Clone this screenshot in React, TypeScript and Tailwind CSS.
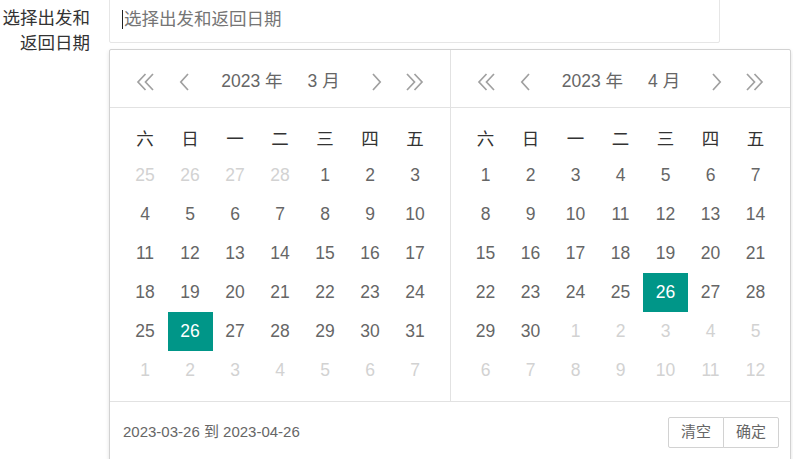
import React from "react";

type Day = { n: number; muted?: boolean; selected?: boolean };

const FONT = { fontFamily: '"Liberation Sans", "Noto Sans CJK SC", sans-serif' };

const WEEK = ["六", "日", "一", "二", "三", "四", "五"];

function range(a: number, b: number, muted = false): Day[] {
  const out: Day[] = [];
  for (let i = a; i <= b; i++) out.push({ n: i, muted });
  return out;
}

//March 2023, week starts on Saturday
const march: Day[] = [...range(25, 28, true), ...range(1, 31), ...range(1, 7, true)].map(
  (d) => (!d.muted && d.n === 26 ? { ...d, selected: true } : d)
);

//April 2023
const april: Day[] = [...range(1, 30), ...range(1, 12, true)].map((d) =>
  !d.muted && d.n === 26 ? { ...d, selected: true } : d
);

function Single({ flip }: { flip?: boolean }) {
  return (
    <svg width="10" height="18" viewBox="0 0 10 18" className={flip ? "rotate-180" : ""}>
      <polyline points="9,1 1.8,9 9,17" fill="none" stroke="#a0a0a0" strokeWidth="1.7" />
    </svg>
  );
}

function Double({ flip }: { flip?: boolean }) {
  return (
    <svg width="19" height="18" viewBox="0 0 19 18" className={flip ? "rotate-180" : ""}>
      <polyline points="9.5,1 2,9 9.5,17" fill="none" stroke="#a0a0a0" strokeWidth="1.7" />
      <polyline points="17,1 9.5,9 17,17" fill="none" stroke="#a0a0a0" strokeWidth="1.7" />
    </svg>
  );
}

function Panel({ month, days, border }: { month: number; days: Day[]; border?: boolean }) {
  return (
    <div className={border ? "w-[341px] border-r border-[#e2e2e2]" : "w-[339px]"}>
      {/* header */}
      <div className="h-[58px] pt-[6px] border-b border-[#e2e2e2] flex items-center px-[26px] text-[#666]">
        <Double />
        <span className="ml-[24px] flex">
          <Single />
        </span>
        <div className="flex-1 flex justify-center text-[17.5px]">
          <span>2023 年</span>
          <span className="ml-[25px]">{month} 月</span>
        </div>
        <span className="mr-[23px] flex">
          <Single flip />
        </span>
        <Double flip />
      </div>
      {/* table */}
      <div className="pt-[14px] pb-[11px] flex flex-col items-center">
        <div className="grid grid-cols-7 w-[315px]">
          {WEEK.map((w) => (
            <div key={w} className="h-[34px] flex items-center justify-center text-[17.5px] text-[#333]">
              {w}
            </div>
          ))}
          {days.map((d, i) => (
            <div
              key={i}
              className={
                "h-[39px] flex items-center justify-center text-[17.5px] " +
                (d.selected ? "bg-[#009688] text-white" : d.muted ? "text-[#d2d2d2]" : "text-[#666]")
              }
            >
              {d.n}
            </div>
          ))}
        </div>
      </div>
    </div>
  );
}

export default function App(): JSX.Element {
  return (
    <div className="w-[793px] h-[459px] overflow-hidden bg-white flex" style={FONT}>
      <label className="w-[90px] shrink-0 pt-[6px] text-right text-[17.5px] leading-[25px] text-[#333]">
        选择出发和返回日期
      </label>
      <div className="ml-[19px] flex flex-col">
        <div className="-mt-[5px] shrink-0 w-[611px] h-[48px] border border-[#e6e6e6] rounded-[2px] flex items-center pl-[12px] text-[17.5px] text-[#757575]">
          <span className="w-px h-[19px] bg-[#222] mr-[1px]"></span>
          选择出发和返回日期
        </div>
        <div className="mt-[6px] shrink-0 w-[682px] border border-[#d2d2d2] rounded-[2px] bg-white shadow-[0_2px_4px_rgba(0,0,0,0.12)]">
          <div className="flex">
            <Panel month={3} days={march} border />
            <Panel month={4} days={april} />
          </div>
          <div className="h-[62px] border-t border-[#e2e2e2] flex items-center justify-between pl-[13px] pr-[11px]">
            <span className="text-[15px] text-[#666]">2023-03-26 到 2023-04-26</span>
            <div className="flex">
              <button className="h-[31px] px-[12px] border border-[#d2d2d2] rounded-l-[2px] text-[15px] text-[#666] bg-white">
                清空
              </button>
              <button className="-ml-px h-[31px] px-[12px] border border-[#d2d2d2] rounded-r-[2px] text-[15px] text-[#666] bg-white">
                确定
              </button>
            </div>
          </div>
        </div>
      </div>
    </div>
  );
}
